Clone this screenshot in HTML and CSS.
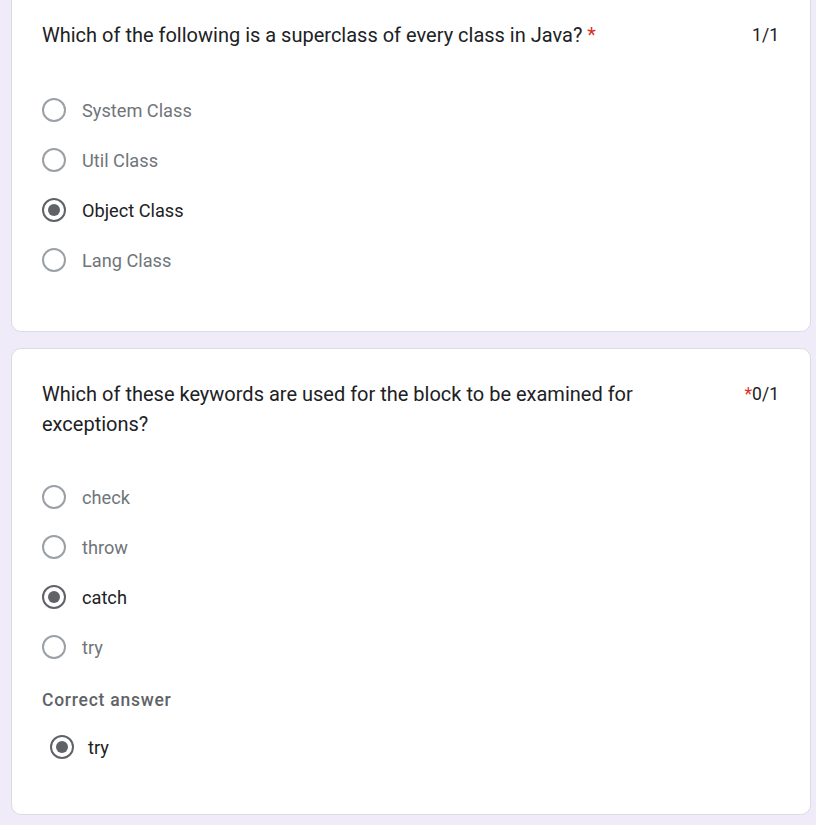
FILE: index.html
```html
<!DOCTYPE html>
<html lang="en">
<head>
<meta charset="utf-8">
<title>Quiz results</title>
<link rel="stylesheet" href="styles.css">
</head>
<body>
<main class="page">
  <section class="card card-first">
    <div class="q-header q-header-single">
      <div class="q-title">Which of the following is a superclass of every class in Java? <span class="req">*</span></div>
      <div class="q-score">1/1</div>
    </div>
    <ul class="options">
      <li class="option"><span class="radio"></span><span class="opt-label">System Class</span></li>
      <li class="option"><span class="radio"></span><span class="opt-label">Util Class</span></li>
      <li class="option selected"><span class="radio"></span><span class="opt-label">Object Class</span></li>
      <li class="option"><span class="radio"></span><span class="opt-label">Lang Class</span></li>
    </ul>
  </section>

  <section class="card">
    <div class="q-header">
      <div class="q-title">Which of these keywords are used for the block to be examined for exceptions?</div>
      <div class="q-score"><span class="req">*</span>0/1</div>
    </div>
    <ul class="options">
      <li class="option"><span class="radio"></span><span class="opt-label">check</span></li>
      <li class="option"><span class="radio"></span><span class="opt-label">throw</span></li>
      <li class="option selected"><span class="radio"></span><span class="opt-label">catch</span></li>
      <li class="option"><span class="radio"></span><span class="opt-label">try</span></li>
    </ul>
    <div class="correct">
      <div class="correct-title">Correct answer</div>
      <div class="option selected correct-option"><span class="radio"></span><span class="opt-label">try</span></div>
    </div>
  </section>
</main>
</body>
</html>
```

FILE: styles.css
```css
html, body {
  margin: 0;
  padding: 0;
  background: #f0ebf8;
}

body {
  font-family: Roboto, "Liberation Sans", Arial, sans-serif;
  color: #202124;
}

.page {
  padding: 0 0 0 11px;
}

.card {
  box-sizing: border-box;
  width: 800px;
  background: #ffffff;
  border: 1px solid #dadce0;
  border-radius: 10px;
  padding: 30px 31px 30px 30px;
  margin-top: 16px;
}

.card-first {
  margin-top: -11px;
}

.q-header {
  display: flex;
  justify-content: space-between;
  align-items: flex-start;
  margin-bottom: 33px;
}

.q-header-single {
  margin-bottom: 35px;
}

.q-title {
  flex: 1;
  font-size: 20px;
  line-height: 30px;
  margin-right: 24px;
  color: #202124;
}

.req {
  color: #d93025;
}

.q-score {
  font-size: 17.5px;
  line-height: 30px;
  color: #202124;
  white-space: nowrap;
}

.options {
  list-style: none;
  margin: 0 0 16px 0;
  padding: 0;
}

.option {
  display: flex;
  align-items: center;
  height: 50px;
}

.radio {
  box-sizing: border-box;
  width: 24px;
  height: 24px;
  border: 2px solid #9aa0a6;
  border-radius: 50%;
  margin-right: 16px;
  display: flex;
  align-items: center;
  justify-content: center;
  flex: none;
}

.option.selected .radio {
  border-color: #5f6368;
}

.option.selected .radio::after {
  content: "";
  width: 12px;
  height: 12px;
  border-radius: 50%;
  background: #5f6368;
}

.opt-label {
  font-size: 18.2px;
  line-height: 24px;
  padding-top: 2px;
  color: #70757a;
}

.option.selected .opt-label {
  color: #202124;
}

.correct {
  padding-bottom: 12px;
}

.correct-title {
  font-size: 17.5px;
  font-weight: 500;
  letter-spacing: 0.75px;
  line-height: 24px;
  color: #5f6368;
}

.correct-option {
  margin-top: 10px;
  padding-left: 8px;
}

.correct-option .radio {
  margin-right: 14px;
}
```
